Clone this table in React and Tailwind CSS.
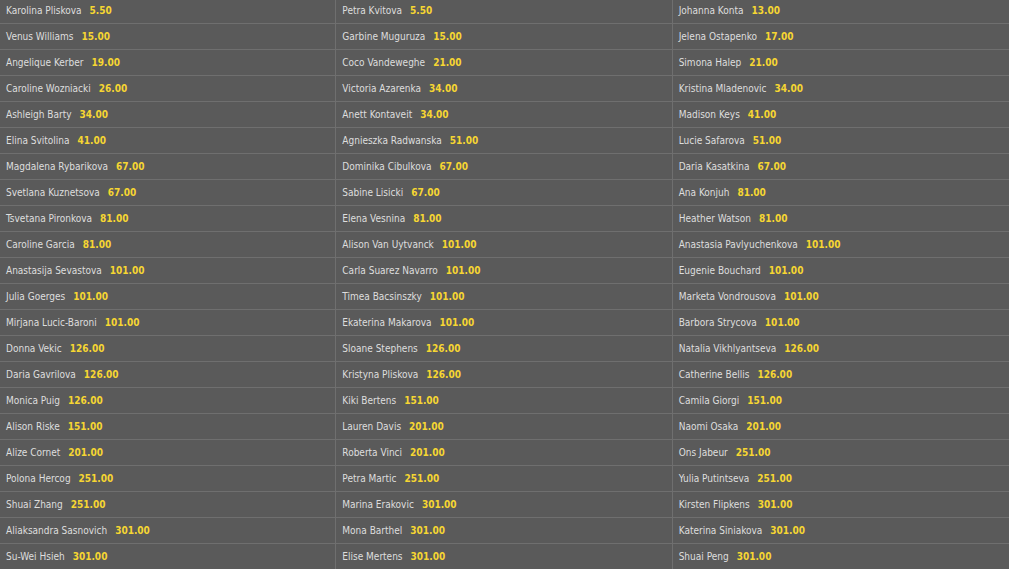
import React from "react";

const rows = [
  [["Karolina Pliskova", "5.50"], ["Petra Kvitova", "5.50"], ["Johanna Konta", "13.00"]],
  [["Venus Williams", "15.00"], ["Garbine Muguruza", "15.00"], ["Jelena Ostapenko", "17.00"]],
  [["Angelique Kerber", "19.00"], ["Coco Vandeweghe", "21.00"], ["Simona Halep", "21.00"]],
  [["Caroline Wozniacki", "26.00"], ["Victoria Azarenka", "34.00"], ["Kristina Mladenovic", "34.00"]],
  [["Ashleigh Barty", "34.00"], ["Anett Kontaveit", "34.00"], ["Madison Keys", "41.00"]],
  [["Elina Svitolina", "41.00"], ["Agnieszka Radwanska", "51.00"], ["Lucie Safarova", "51.00"]],
  [["Magdalena Rybarikova", "67.00"], ["Dominika Cibulkova", "67.00"], ["Daria Kasatkina", "67.00"]],
  [["Svetlana Kuznetsova", "67.00"], ["Sabine Lisicki", "67.00"], ["Ana Konjuh", "81.00"]],
  [["Tsvetana Pironkova", "81.00"], ["Elena Vesnina", "81.00"], ["Heather Watson", "81.00"]],
  [["Caroline Garcia", "81.00"], ["Alison Van Uytvanck", "101.00"], ["Anastasia Pavlyuchenkova", "101.00"]],
  [["Anastasija Sevastova", "101.00"], ["Carla Suarez Navarro", "101.00"], ["Eugenie Bouchard", "101.00"]],
  [["Julia Goerges", "101.00"], ["Timea Bacsinszky", "101.00"], ["Marketa Vondrousova", "101.00"]],
  [["Mirjana Lucic-Baroni", "101.00"], ["Ekaterina Makarova", "101.00"], ["Barbora Strycova", "101.00"]],
  [["Donna Vekic", "126.00"], ["Sloane Stephens", "126.00"], ["Natalia Vikhlyantseva", "126.00"]],
  [["Daria Gavrilova", "126.00"], ["Kristyna Pliskova", "126.00"], ["Catherine Bellis", "126.00"]],
  [["Monica Puig", "126.00"], ["Kiki Bertens", "151.00"], ["Camila Giorgi", "151.00"]],
  [["Alison Riske", "151.00"], ["Lauren Davis", "201.00"], ["Naomi Osaka", "201.00"]],
  [["Alize Cornet", "201.00"], ["Roberta Vinci", "201.00"], ["Ons Jabeur", "251.00"]],
  [["Polona Hercog", "251.00"], ["Petra Martic", "251.00"], ["Yulia Putintseva", "251.00"]],
  [["Shuai Zhang", "251.00"], ["Marina Erakovic", "301.00"], ["Kirsten Flipkens", "301.00"]],
  [["Aliaksandra Sasnovich", "301.00"], ["Mona Barthel", "301.00"], ["Katerina Siniakova", "301.00"]],
  [["Su-Wei Hsieh", "301.00"], ["Elise Mertens", "301.00"], ["Shuai Peng", "301.00"]],
];

const Cell = ({ name, odds, last }) => (
  <div
    className={
      "flex h-[26px] items-center border-b border-[#6f6f6f] pl-[6px] " +
      (last ? "" : "border-r")
    }
  >
    <span className="text-[#dedede]">{name}</span>
    <span className="ml-[8px] font-bold text-[#f6d632]">{odds}</span>
  </div>
);

const App = () => {
  return (
    <div className="h-screen overflow-hidden bg-[#5a5a5a] font-['DejaVu_Sans_Condensed','Liberation_Sans',sans-serif] text-[10px]">
      <div className="-mt-[2px] grid grid-cols-3">
        {rows.map((row, i) =>
          row.map(([name, odds], j) => (
            <Cell key={i + "-" + j} name={name} odds={odds} last={j === 2} />
          ))
        )}
      </div>
    </div>
  );
};

export default App;
